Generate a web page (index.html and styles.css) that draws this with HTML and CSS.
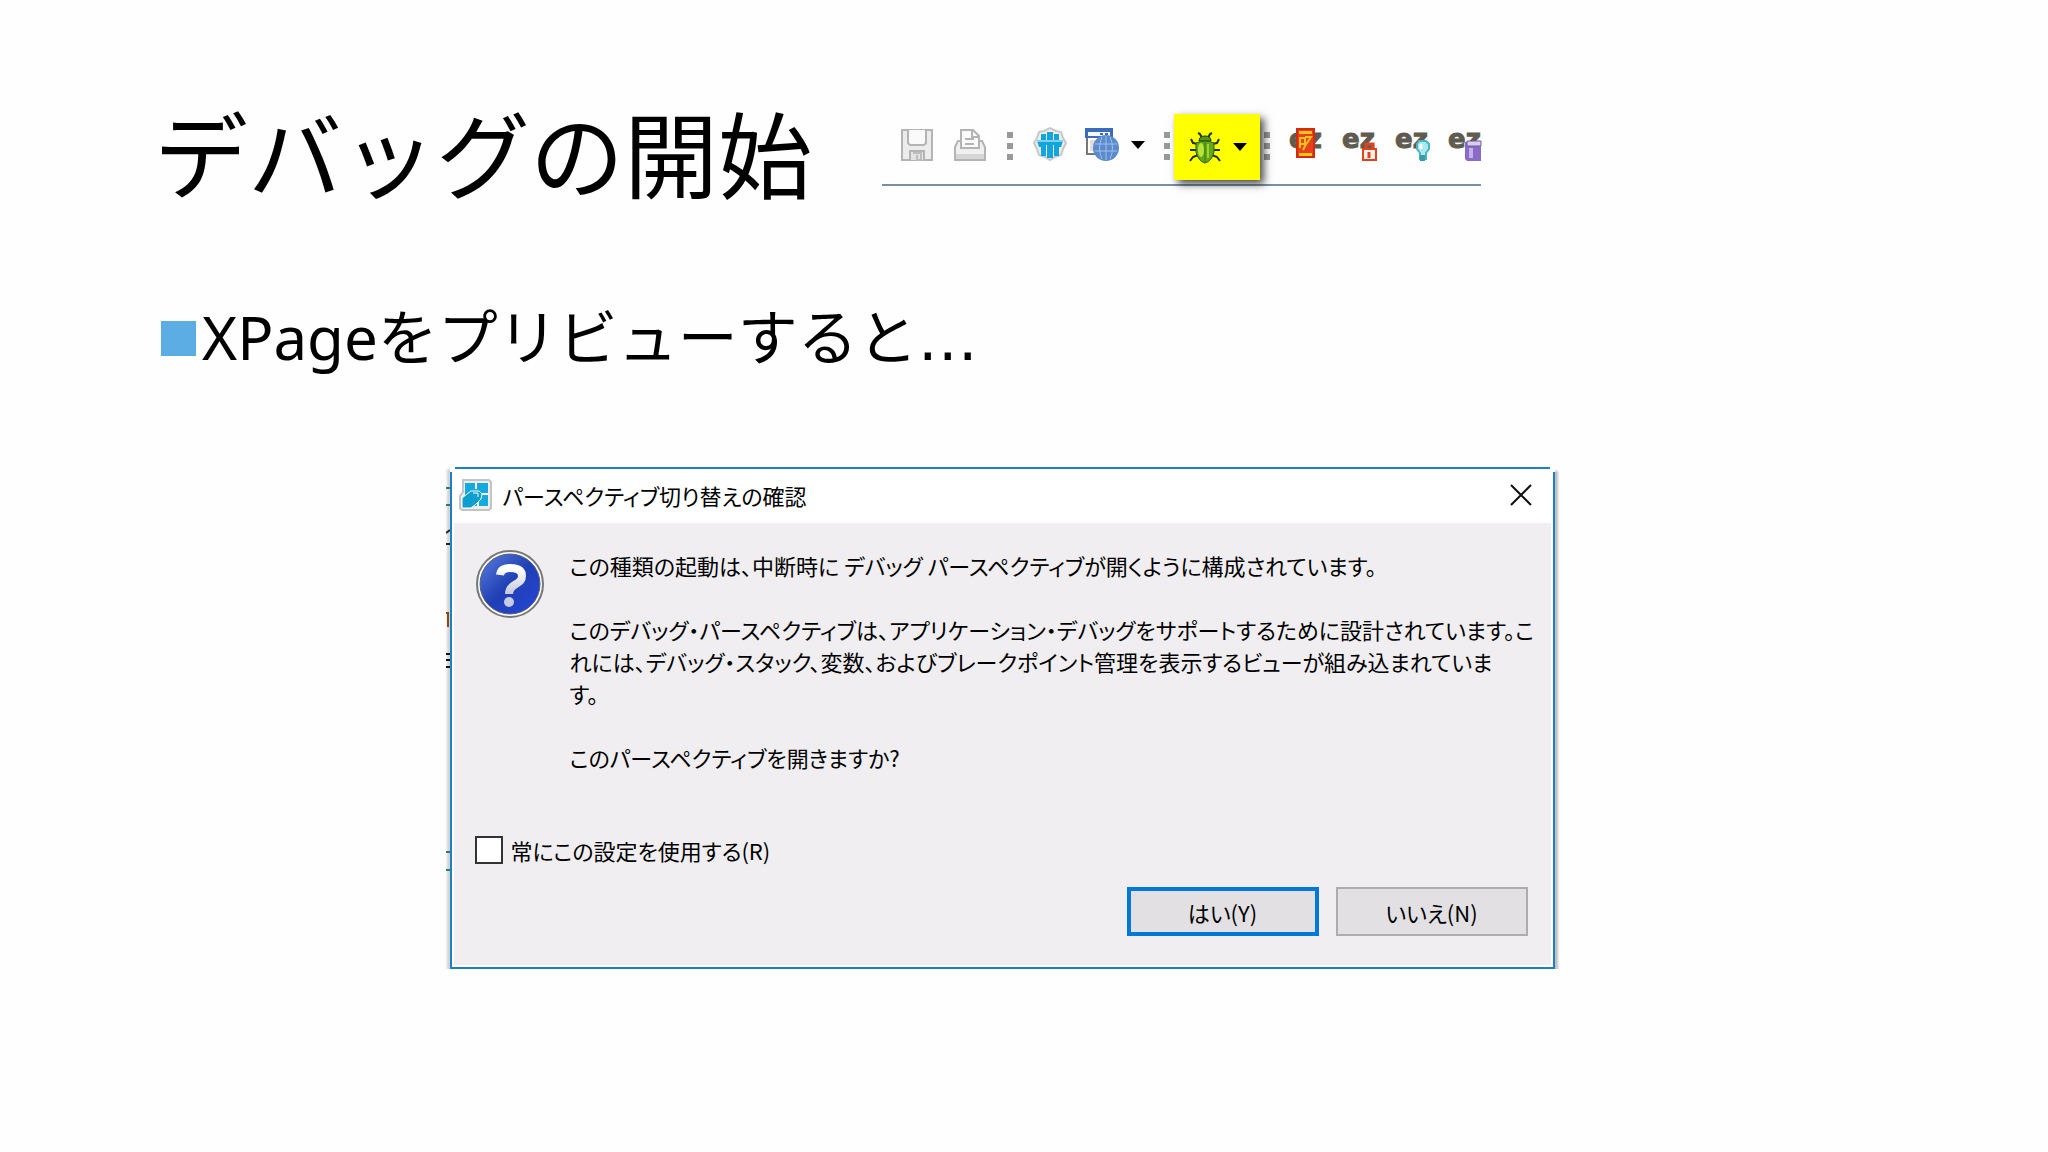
FILE: index.html
```html
<!DOCTYPE html>
<html lang="ja">
<head>
    <meta charset="UTF-8">
    <meta name="viewport" content="width=device-width, initial-scale=1.0">
    <title>デバッグの開始</title>
    <link rel="stylesheet" href="styles.css">
</head>
<body>
    <main class="slide">
        <header class="slide-header">
            <h1>デバッグの開始</h1>
            <div class="toolbar">
                <div class="group">
                    <button class="tool" aria-label="保存">
                        <svg viewBox="0 0 36 36">
                            <path d="M3 3h30v30H3z" fill="#ececec" stroke="#b4b4b4" stroke-width="2"/>
                            <path d="M9 3v13l2 2h14l2-2V3" fill="#fafafa" stroke="#b4b4b4" stroke-width="2"/>
                            <path d="M11 33v-9h14v9" fill="#e2e2e2" stroke="#b4b4b4" stroke-width="2"/>
                            <path d="M14 26h8v7h-4v-5" fill="none" stroke="#bdbdbd" stroke-width="2"/>
                        </svg>
                    </button>
                    <button class="tool" aria-label="印刷">
                        <svg viewBox="0 0 36 36">
                            <path d="M3 20l3-6h24l3 6v13H3z" fill="#f0f0f0" stroke="#b4b4b4" stroke-width="2"/>
                            <path d="M9 21V3h12l6 6v12z" fill="#fbfbfb" stroke="#b4b4b4" stroke-width="2"/>
                            <path d="M20 3v7h7M13 12h9M13 17h9" fill="none" stroke="#b4b4b4" stroke-width="2"/>
                            <path d="M4 27h28v5H4z" fill="#d6d6d6"/>
                        </svg>
                    </button>
                </div>
                <span class="dots"></span>
                <div class="group">
                    <button class="tool" aria-label="Notes">
                        <svg viewBox="0 0 36 36">
                            <path d="M12 4l6-3 6 3 5 1 2 6 3 5-3 6-2 6-6 2-5 3-5-3-6-2-2-6-3-6 3-5 2-6z" fill="#eee" stroke="#c8c8c8" stroke-width="2"/>
                            <path d="M9 7h5v6H9zM15 5h6v8h-6zM22 7h5v6h-5z" fill="#10a5dc"/>
                            <path d="M5 14h26l-2 6h-2v9h-5V18h-1v13h-6V18h-1v11H9v-9H7z" fill="#10a5dc"/>
                            <path d="M5 14h26" stroke="#7fd0ee" stroke-width="2"/>
                        </svg>
                    </button>
                    <button class="tool split" aria-label="プレビュー">
                        <svg viewBox="0 0 36 36">
                            <path d="M2 3h24v24H2z" fill="#fff" stroke="#777" stroke-width="2"/>
                            <path d="M0 1h28v10H0z" fill="#3a6cba"/>
                            <path d="M3 5h22v4H3z" fill="#f2f6fd"/>
                            <path d="M15 7h3M20 7h3" stroke="#3a6cba" stroke-width="2"/>
                            <path d="M5 13h5v11H5z" fill="#e5dcd8"/>
                            <circle cx="21" cy="21" r="13" fill="#5b8bcd"/>
                            <path d="M10 17h22M10 24h22M17 10q-5 11 0 22M25 10q5 11 0 22M21 9v24" fill="none" stroke="#9dbfe9" stroke-width="1"/>
                        </svg>
                        <span class="arrow"></span>
                    </button>
                </div>
                <span class="dots"></span>
                <button class="tool split debug" aria-label="デバッグ">
                    <svg viewBox="0 0 36 36">
                        <g fill="none" stroke="#1c3300" stroke-width="2">
                            <path d="M15 9l-2-4-2-1M21 9l2-4 2-1M11 15l-5-1-2-4M25 15l5-1 2-4M10 21H3M26 21h7M11 26l-5 2-3 4M25 26l5 2 3 4"/>
                        </g>
                        <path d="M12 12q0-5 6-5t6 5z" fill="#4f9a12" stroke="#1c3300"/>
                        <path d="M9 14q9-4 18 0v9q-2 9-9 11-7-2-9-11z" fill="#64a818" stroke="#2c5a00" stroke-width="1"/>
                        <ellipse cx="14" cy="21" rx="3" ry="7" fill="#b9e43a"/>
                        <path d="M18 13v20" stroke="#3b7a12" stroke-width="1"/>
                        <path d="M21 15v14" stroke="#9fd22a" stroke-width="2"/>
                    </svg>
                    <span class="arrow"></span>
                </button>
                <span class="dots"></span>
                <div class="group">
                    <button class="tool">
                        <svg viewBox="0 0 36 36">
                            <text class="ez" x="0" y="21">ez</text>
                            <path d="M8 2h17v28H8z" fill="#e8401c" stroke="#d42a10" stroke-width="2"/>
                            <path d="M10 4h13v3H10zM10 26h13v3H10z" fill="#ffc21c"/>
                            <path d="M12 17h4v-6h-5v10M16 10h6l-6 9-2 4" fill="none" stroke="#ffc21c" stroke-width="2"/>
                        </svg>
                    </button>
                    <button class="tool">
                        <svg viewBox="0 0 36 36">
                            <text class="ez" x="0" y="21">ez</text>
                            <path d="M24 22v-5h7v5" fill="none" stroke="#e0421e" stroke-width="3"/>
                            <path d="M21 22h13v11H21z" fill="#fff1e6" stroke="#e0421e" stroke-width="2"/>
                            <path d="M27 25v6" stroke="#e0421e" stroke-width="3"/>
                        </svg>
                    </button>
                    <button class="tool">
                        <svg viewBox="0 0 36 36">
                            <text class="ez" x="0" y="21">ez</text>
                            <path d="M24 14h7l3 3v5l-3 4v6h-6v-6l-3-4v-5z" fill="#a9eaf0" stroke="#49b4c0" stroke-width="2"/>
                            <path d="M25 28h5v6h-5z" fill="#3b98a6"/>
                            <path d="M26 17v5" stroke="#fff" stroke-width="3"/>
                        </svg>
                    </button>
                    <button class="tool">
                        <svg class="last" viewBox="0 0 33 36">
                            <text class="ez" x="0" y="21">ez</text>
                            <path d="M17 15h16v19H19l-2-2z" fill="#8a6cc8"/>
                            <path d="M19 14h14v5H19z" fill="#d9cdf2" stroke="#6e5a94" stroke-width="1"/>
                            <path d="M23 21v10" stroke="#c4b2ea" stroke-width="4"/>
                        </svg>
                    </button>
                </div>
            </div>
        </header>

        <h2><span>XPageをプリビューすると<span class="ellipsis">…</span></span></h2>

        <section class="dialog" role="dialog" aria-labelledby="dialog-title">
            <svg class="behind" viewBox="0 0 4 400">
                <path d="M0 1h4M0 18h4" stroke="#2f7d68" stroke-width="2"/>
                <path d="M0 46l4-3M0 57h4" stroke="#222" stroke-width="2"/>
                <path d="M0 126h2v14" fill="none" stroke="#8a4b12" stroke-width="2"/>
                <path d="M0 167h4M0 173h4M0 180h4" stroke="#111" stroke-width="2"/>
                <path d="M0 365h4M0 383h4" stroke="#2f7d68" stroke-width="2"/>
            </svg>
            <div class="titlebar">
                <svg class="app-icon" viewBox="0 0 34 34">
                    <path d="M4 2h26l2 2v26l-2 2H3l-2-2V18l3-4z" fill="#eee" stroke="#c4c4c4" stroke-width="2"/>
                    <path d="M6 5h23v23H6z" fill="#12aadf"/>
                    <path d="M17 5v6M22 16h7M19 22v6" stroke="#fff" stroke-width="2"/>
                    <path d="M3 20l9-7h8l3 3-1 5-6 6-4 3H3z" fill="#0d9fd0" stroke="#fff" stroke-width="1"/>
                    <path d="M14 15h5v4" fill="none" stroke="#fff" stroke-width="1"/>
                </svg>
                <span id="dialog-title">パースペクティブ切り替えの確認</span>
                <button class="close" aria-label="閉じる">
                    <svg viewBox="0 0 22 22"><path d="M1 1l20 20M21 1L1 21" stroke="#111" stroke-width="2"/></svg>
                </button>
            </div>
            <div class="dialog-body">
                <div class="message">
                    <svg class="question" viewBox="0 0 70 70">
                        <defs>
                            <linearGradient id="blue" x1="0" y1="0" x2="1" y2="1">
                                <stop offset="0" stop-color="#5b7fdc"/>
                                <stop offset=".5" stop-color="#1f3fb4"/>
                                <stop offset="1" stop-color="#2646d8"/>
                            </linearGradient>
                            <linearGradient id="silver" x1="0" y1="0" x2="0" y2="1">
                                <stop offset="0" stop-color="#fff"/>
                                <stop offset="1" stop-color="#c4c8dc"/>
                            </linearGradient>
                        </defs>
                        <circle cx="35" cy="35" r="33" fill="#fff" stroke="#777" stroke-width="2"/>
                        <circle cx="35" cy="35" r="30" fill="url(#blue)" stroke="#555c80" stroke-width="1"/>
                        <path d="M25 26q1-7 10-7 12 0 12 8 0 5-6 8-7 4-7 10" fill="none" stroke="url(#silver)" stroke-width="8"/>
                        <circle cx="34" cy="53" r="5" fill="#c8cce0"/>
                    </svg>
                    <div class="text">
                        <p>この種類の起動は、中断時に デバッグ パースペクティブが開くように構成されています。</p>
                        <p>このデバッグ・パースペクティブは、アプリケーション・デバッグをサポートするために設計されています。こ<br>れには、デバッグ・スタック、変数、およびブレークポイント管理を表示するビューが組み込まれていま<br>す。</p>
                        <p>このパースペクティブを開きますか?</p>
                    </div>
                </div>
                <label class="remember"><input type="checkbox">常にこの設定を使用する(R)</label>
                <div class="buttons">
                    <button class="btn primary">はい(Y)</button>
                    <button class="btn">いいえ(N)</button>
                </div>
            </div>
        </section>
    </main>
</body>
</html>
```
FILE: styles.css
```css
* {
    box-sizing: border-box;
}
body {
    margin: 0;
    background: #fefefe;
    color: #000;
    font-family: "Noto Sans", "Noto Sans CJK JP", sans-serif;
}
.slide {
    padding: 109px 198px 0 154px;
}
.slide-header {
    display: flex;
    align-items: flex-start;
    gap: 70px;
}
h1, h2, p {
    margin: 0;
    font-weight: normal;
}
h1 {
    font-size: 94px;
    line-height: 94px;
    white-space: nowrap;
}
h2 {
    display: flex;
    align-items: center;
    gap: 6px;
    margin-top: 104px;
    padding-left: 7px;
    font-size: 60px;
    line-height: 60px;
}
h2::before {
    content: "";
    width: 35px;
    height: 35px;
    background: #5dade5;
}
.ellipsis {
    font-family: "DejaVu Sans", sans-serif;
    line-height: 1;
}

/* toolbar */
.toolbar {
    display: flex;
    align-items: center;
    margin-top: 5px;
    padding: 0 0 4px 5px;
    border-bottom: 2px solid #7790a2;
}
.group {
    display: flex;
    gap: 17px;
    padding: 0 12px 4px;
}
.group:last-child {
    padding-right: 0;
}
.tool {
    display: flex;
    align-items: center;
    padding: 0;
    border: none;
    background: none;
}
.tool svg {
    width: 36px;
    height: 36px;
    overflow: visible;
}
.tool .last {
    width: 33px;
}
.split {
    gap: 10px;
}
.arrow {
    border: 7px solid transparent;
    border-top: 8px solid #000;
    border-bottom: none;
}
.dots {
    width: 6px;
    height: 28px;
    margin: 0 7px 3px;
    background: repeating-linear-gradient(#999 0 6px, transparent 6px 11px);
}
.debug {
    position: relative;
    justify-content: center;
    width: 86px;
    height: 66px;
    margin: 0 -3px;
    background: #ff0;
    box-shadow: 4px 4px 8px rgba(0, 0, 0, 0.7);
}
.ez {
    font: bold 26px "DejaVu Sans", sans-serif;
    fill: #5f5b50;
    stroke: #5f5b50;
    stroke-width: 1px;
}

/* dialog */
.dialog {
    position: relative;
    max-width: 1105px;
    margin: 98px auto 0;
    border: 2px solid #1d80c4;
    background: #fff;
    box-shadow: 3px 4px 2px #c0c0c4, -3px 2px 2px #d4d4d4;
    font-family: "Noto Sans CJK JP", sans-serif;
    font-feature-settings: "palt";
    font-size: 22px;
    line-height: 32px;
}
.dialog::before, .dialog::after {
    content: "";
    position: absolute;
    top: -2px;
    left: -2px;
    width: 5px;
    height: 5px;
    background: #fefefe;
}
.dialog::after {
    left: auto;
    right: -2px;
}
.behind {
    position: absolute;
    top: 18px;
    left: -6px;
    width: 4px;
    height: 400px;
}
.titlebar {
    display: flex;
    align-items: center;
    gap: 10px;
    height: 54px;
    padding: 0 21px 3px 7px;
}
.app-icon {
    width: 34px;
    height: 34px;
}
.close {
    margin-left: auto;
    padding: 0;
    border: none;
    background: none;
}
.close svg {
    display: block;
    width: 22px;
    height: 22px;
}
.dialog-body {
    margin: 0 2px 2px;
    padding: 26px 23px 29px 21px;
    background: #f0eef0;
}
.message {
    display: flex;
    gap: 25px;
}
.question {
    flex: none;
    width: 70px;
    height: 70px;
}
.text {
    white-space: nowrap;
}
.text p + p {
    margin-top: 32px;
}
.remember {
    display: flex;
    align-items: center;
    gap: 8px;
    margin-top: 61px;
}
.remember input {
    appearance: none;
    width: 28px;
    height: 28px;
    margin: 0;
    border: 2px solid #333;
    background: #fff;
}
.buttons {
    display: flex;
    justify-content: flex-end;
    gap: 17px;
    margin-top: 21px;
}
.btn {
    width: 192px;
    height: 49px;
    border: 2px solid #adadad;
    background: #e2e0e2;
    color: #000;
    font: inherit;
    font-feature-settings: inherit;
}
.primary {
    border: 4px solid #0078d7;
}
```
